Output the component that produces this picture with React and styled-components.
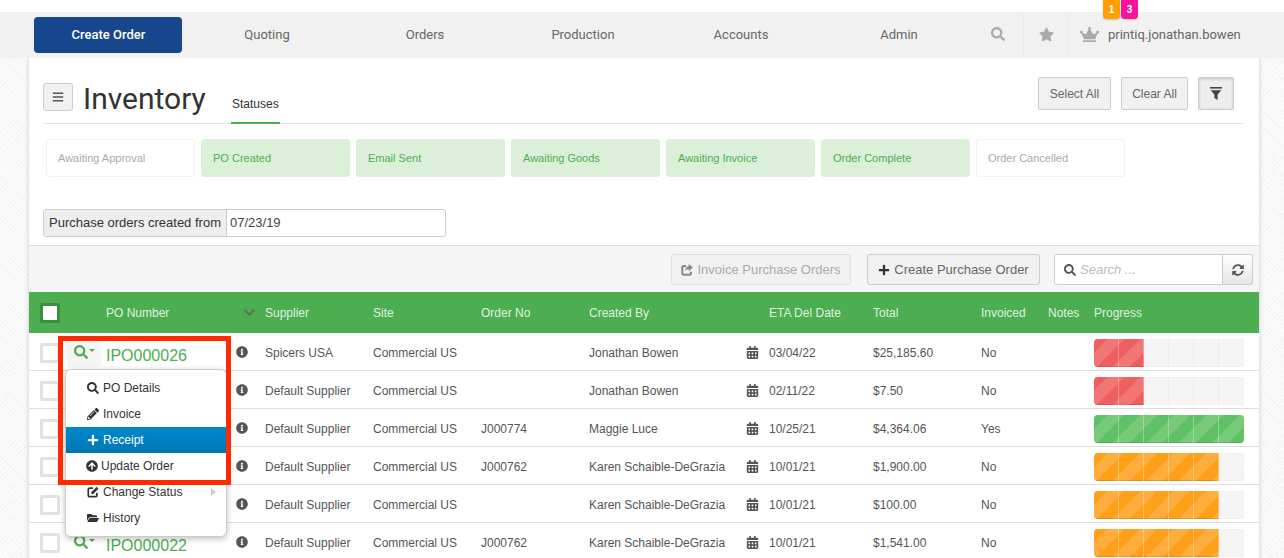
import React from 'react';
import styled, { createGlobalStyle } from 'styled-components';
import {
    FaSearch, FaStar, FaCrown, FaBars, FaPlus, FaPencilAlt, FaArrowCircleUp,
    FaFolderOpen, FaInfoCircle, FaCalendarAlt, FaSyncAlt, FaChevronDown,
} from 'react-icons/fa';

const GlobalStyle = createGlobalStyle`
    html, body {
        margin: 0;
        padding: 0;
        height: 558px;
        overflow: hidden;
        background-color: #fcfcfc;
        background-image:
            repeating-linear-gradient(45deg, #f5f5f5 0 1px, transparent 1px 3px),
            repeating-linear-gradient(-45deg, #f7f7f7 0 1px, transparent 1px 4px);
        font-family: "Liberation Sans", Arial, sans-serif;
        color: #333;
    }
`;

const navItems = ['Quoting', 'Orders', 'Production', 'Accounts', 'Admin'];
const statuses = [
    { label: 'Awaiting Approval', done: false },
    { label: 'PO Created', done: true },
    { label: 'Email Sent', done: true },
    { label: 'Awaiting Goods', done: true },
    { label: 'Awaiting Invoice', done: true },
    { label: 'Order Complete', done: true },
    { label: 'Order Cancelled', done: false },
];
const karen = 'Karen Schaible-DeGrazia';
// rows 2 to 5 have their PO number hidden behind the open menu
const orders = [
    { po: 'IPO000026', open: true, supplier: 'Spicers USA', job: '', by: 'Jonathan Bowen', eta: '03/04/22', total: '$25,185.60', invoiced: 'No', color: 'red', steps: 2 },
    { po: '', supplier: 'Default Supplier', job: '', by: 'Jonathan Bowen', eta: '02/11/22', total: '$7.50', invoiced: 'No', color: 'red', steps: 2 },
    { po: '', supplier: 'Default Supplier', job: 'J000774', by: 'Maggie Luce', eta: '10/25/21', total: '$4,364.06', invoiced: 'Yes', color: 'green', steps: 6 },
    { po: '', supplier: 'Default Supplier', job: 'J000762', by: karen, eta: '10/01/21', total: '$1,900.00', invoiced: 'No', color: 'orange', steps: 5 },
    { po: '', supplier: 'Default Supplier', job: '', by: karen, eta: '10/01/21', total: '$100.00', invoiced: 'No', color: 'orange', steps: 5 },
    { po: 'IPO000022', supplier: 'Default Supplier', job: 'J000762', by: karen, eta: '10/01/21', total: '$1,541.00', invoiced: 'No', color: 'orange', steps: 5 },
];
const barColors = { red: '#ef5f5f', green: '#5fc163', orange: '#ff9f1a' };

function Progress({ color, steps }) {
    return (
        <Track>
            {Array.from({ length: 6 }, (_, i) => (
                <Segment key={i} $color={i < steps ? barColors[color] : null} $index={i} />
            ))}
        </Track>
    );
}

function EditIcon() {
    return (
        <svg width="12" height="12" viewBox="0 0 14 14" fill="#333">
            <path d="M11.5 8v3a1.5 1.5 0 0 1-1.5 1.5H3A1.5 1.5 0 0 1 1.5 11V4A1.5 1.5 0 0 1 3 2.5h4" fill="none" stroke="#333" strokeWidth="2" />
            <path d="M5 7.2 11.2 1 13.4 3.2 7.2 9.4 5 9.4Z" />
        </svg>
    );
}

function ShareIcon() {
    return (
        <svg width="12" height="12" viewBox="0 0 14 14" fill="#888">
            <path d="M11.5 9v2a1.5 1.5 0 0 1-1.5 1.5H3A1.5 1.5 0 0 1 1.5 11V4A1.5 1.5 0 0 1 3 2.5h3" fill="none" stroke="#888" strokeWidth="2.4" />
            <path d="M9 0 14 4.2 9 8.4V6C7 6 5.8 6.6 5 8.2 5 5 6.6 2.8 9 2.6Z" />
        </svg>
    );
}

function OrderRow({ order }) {
    return (
        <Row>
            <CheckBox />
            <RowMenuButton $open={order.open}>
                <FaSearch size={14} />
                <Caret />
            </RowMenuButton>
            <PoNumber>{order.po}</PoNumber>
            <InfoIcon><FaInfoCircle size={12} /></InfoIcon>
            <span>{order.supplier}</span>
            <span>Commercial US</span>
            <span>{order.job}</span>
            <span>{order.by}</span>
            <InfoIcon><FaCalendarAlt size={13} /></InfoIcon>
            <span>{order.eta}</span>
            <span>{order.total}</span>
            <span>{order.invoiced}</span>
            <span />
            <Progress color={order.color} steps={order.steps} />
        </Row>
    );
}

export default function App() {
    return (
        <Page>
            <GlobalStyle />
            <TopNav>
                <CreateOrder>Create Order</CreateOrder>
                {navItems.map(item => <NavItem key={item}>{item}</NavItem>)}
                <NavIcon $width={47} $shift={5}><FaSearch size={14} /></NavIcon>
                <NavIcon $width={45}><FaStar size={15} /></NavIcon>
                <UserCell>
                    <Badge $color="#ffa000" $left={34}>1</Badge>
                    <Badge $color="#f5149a" $left={52}>3</Badge>
                    <FaCrown size={19} color="#aaa" />
                    <span>printiq.jonathan.bowen</span>
                </UserCell>
            </TopNav>

            <Card>
                <TopSection>
                    <PageHead>
                        <MenuButton><FaBars size={12} /></MenuButton>
                        <Title>Inventory</Title>
                        <Tab>Statuses</Tab>
                        <HeadActions>
                            <GreyButton $width={73}>Select All</GreyButton>
                            <GreyButton $width={67}>Clear All</GreyButton>
                            <FilterButton $width={36}>
                                <svg width="12" height="13" viewBox="0 0 12 13" fill="#444">
                                    <rect x="0" y="0" width="12" height="1.6" />
                                    <path d="M0.6 3.2H11.4L7.6 7.6V13L4.4 11V7.6Z" />
                                </svg>
                            </FilterButton>
                        </HeadActions>
                    </PageHead>
                    <StatusRow>
                        {statuses.map(s => <Status key={s.label} $done={s.done}>{s.label}</Status>)}
                    </StatusRow>
                    <DateGroup>
                        <DateLabel>Purchase orders created from</DateLabel>
                        <DateValue>07/23/19</DateValue>
                    </DateGroup>
                </TopSection>

                <Toolbar>
                    <ToolButton $disabled><ShareIcon />Invoice Purchase Orders</ToolButton>
                    <ToolButton $width={173}><FaPlus size={12} color="#333" />Create Purchase Order</ToolButton>
                    <SearchGroup>
                        <SearchBox>
                            <FaSearch size={12} color="#555" />
                            <em>Search ...</em>
                        </SearchBox>
                        <RefreshButton><FaSyncAlt size={12} /></RefreshButton>
                    </SearchGroup>
                </Toolbar>

                <HeadRow>
                    <HeadCheck />
                    <span />
                    <span>PO Number</span>
                    <SortIcon><FaChevronDown size={13} /></SortIcon>
                    <span>Supplier</span>
                    <span>Site</span>
                    <span>Order No</span>
                    <span>Created By</span>
                    <span />
                    <span>ETA Del Date</span>
                    <span>Total</span>
                    <span>Invoiced</span>
                    <span>Notes</span>
                    <span>Progress</span>
                </HeadRow>

                <TableBody>
                    {orders.map((order, i) => <OrderRow key={i} order={order} />)}
                    <Dropdown>
                        <MenuItem><FaSearch size={12} />PO Details</MenuItem>
                        <MenuItem><FaPencilAlt size={12} />Invoice</MenuItem>
                        <MenuItem $active><FaPlus size={12} />Receipt</MenuItem>
                        <MenuItem $tight><FaArrowCircleUp size={12} />Update Order</MenuItem>
                        <MenuItem><EditIcon />Change Status<SubCaret /></MenuItem>
                        <MenuItem><FaFolderOpen size={12} />History</MenuItem>
                    </Dropdown>
                    <Highlight />
                </TableBody>
            </Card>
        </Page>
    );
}

const Page = styled.div`
    height: 558px;
    overflow: hidden;
    padding-top: 12px;
    box-sizing: border-box;
    position: relative;
    &::before {
        content: '';
        display: block;
        position: absolute;
        top: 0;
        left: 0;
        right: 0;
        height: 12px;
        background: #fff;
    }
`;

const TopNav = styled.nav`
    display: flex;
    align-items: center;
    height: 46px;
    padding-left: 29px;
    background: #f1f1f1;
    font-family: Roboto, sans-serif;
    font-size: 13px;
    color: #666;
    position: relative;
`;

const CreateOrder = styled.div`
    width: 148px;
    height: 36px;
    margin: 0 5px;
    padding: 0 0 2px 1px;
    box-sizing: border-box;
    border-radius: 4px;
    background: #16478d;
    color: #fff;
    font-weight: 500;
    display: flex;
    align-items: center;
    justify-content: center;
`;

const NavItem = styled.div`
    width: 158px;
    box-sizing: border-box;
    padding: 0 0 2px 2px;
    text-align: center;
`;

const NavIcon = styled.div`
    width: ${p => p.$width}px;
    height: 46px;
    box-sizing: border-box;
    padding: 0 ${p => p.$shift || 0}px 2px 0;
    border-right: 1px solid #ebebeb;
    color: #aaa;
    display: flex;
    align-items: center;
    justify-content: center;
`;

const UserCell = styled.div`
    display: flex;
    align-items: center;
    gap: 9px;
    height: 46px;
    box-sizing: border-box;
    padding: 0 0 2px 11px;
    white-space: nowrap;
    position: relative;
`;

const Badge = styled.div`
    position: absolute;
    top: -12px;
    left: ${p => p.$left}px;
    width: 17px;
    height: 19px;
    border-radius: 0 0 4px 4px;
    background: ${p => p.$color};
    color: #fff;
    font-family: "Liberation Sans", sans-serif;
    font-size: 10px;
    font-weight: 700;
    display: flex;
    align-items: center;
    justify-content: center;
    box-shadow: 0 1px 2px rgba(0, 0, 0, 0.2);
`;

const Card = styled.main`
    margin: 0 25px 0 29px;
    background: #fff;
    box-shadow: 0 0 5px rgba(0, 0, 0, 0.2);
    font-size: 12px;
`;

const TopSection = styled.section`
    padding: 0 15px 8px 14px;
`;

const PageHead = styled.header`
    display: flex;
    align-items: flex-start;
    height: 66px;
    padding-top: 19px;
    box-sizing: border-box;
    border-bottom: 1px solid #e5e5e5;
`;

const MenuButton = styled.div`
    width: 30px;
    height: 28px;
    margin-top: 6px;
    box-sizing: border-box;
    border: 1px solid #ccc;
    border-radius: 3px;
    background: #f1f1f1;
    color: #555;
    display: flex;
    align-items: center;
    justify-content: center;
`;

const Title = styled.h1`
    margin: 2px 0 0 10px;
    font-family: Roboto, sans-serif;
    font-size: 30px;
    font-weight: 400;
    line-height: 40px;
    color: #333;
`;

const Tab = styled.div`
    align-self: flex-end;
    margin: 0 0 -1px 25px;
    padding-bottom: 10px;
    line-height: 16px;
    width: 49px;
    text-align: center;
    color: #333;
    border-bottom: 2px solid #4cae50;
`;

const HeadActions = styled.div`
    margin-left: auto;
    margin-right: 10px;
    display: flex;
    gap: 10px;
`;

const GreyButton = styled.div`
    width: ${p => p.$width}px;
    height: 33px;
    box-sizing: border-box;
    border: 1px solid #ccc;
    border-radius: 2px;
    background: #f1f1f1;
    color: #666;
    display: flex;
    align-items: center;
    justify-content: center;
`;

const FilterButton = styled(GreyButton)`
    background: #eee;
    box-shadow: inset 0 1px 3px rgba(0, 0, 0, 0.2);
`;

const StatusRow = styled.div`
    display: flex;
    gap: 6px;
    margin-top: 15px;
    padding-left: 3px;
`;

const Status = styled.div`
    width: 149px;
    height: 38px;
    box-sizing: border-box;
    padding-left: 11px;
    border-radius: 3px;
    border: 1px solid ${p => (p.$done ? '#dcefd9' : '#eef3ec')};
    background: ${p => (p.$done ? '#dcefd9' : '#fff')};
    color: ${p => (p.$done ? '#4cae50' : '#aaa')};
    font-size: 11px;
    display: flex;
    align-items: center;
`;

const DateGroup = styled.div`
    display: flex;
    width: 403px;
    height: 28px;
    margin-top: 32px;
    box-sizing: border-box;
    border: 1px solid #ccc;
    border-radius: 3px;
    font-size: 13px;
    overflow: hidden;
`;

const DateLabel = styled.div`
    width: 183px;
    box-sizing: border-box;
    padding-left: 5px;
    background: #eee;
    border-right: 1px solid #ccc;
    color: #333;
    line-height: 26px;
    white-space: nowrap;
`;

const DateValue = styled.div`
    padding-left: 3px;
    color: #444;
    line-height: 26px;
`;

const Toolbar = styled.div`
    display: flex;
    justify-content: flex-end;
    gap: 16px;
    height: 47px;
    padding: 8px 6px 0 0;
    box-sizing: border-box;
    border-top: 1px solid #ddd;
    background: #f5f5f5;
`;

const ToolButton = styled.div`
    width: ${p => p.$width || 180}px;
    height: 31px;
    box-sizing: border-box;
    border: 1px solid ${p => (p.$disabled ? '#e2e2e2' : '#ccc')};
    border-radius: 3px;
    background: #f1f1f1;
    color: ${p => (p.$disabled ? '#aaa' : '#666')};
    font-size: 13px;
    display: flex;
    align-items: center;
    justify-content: center;
    gap: 4px;
    white-space: nowrap;
`;

const SearchGroup = styled.div`
    display: flex;
    width: 199px;
    height: 31px;
    margin-left: -2px;
`;

const SearchBox = styled.div`
    flex: 1;
    box-sizing: border-box;
    border: 1px solid #ccc;
    border-radius: 3px 0 0 3px;
    background: #fff;
    padding-left: 9px;
    display: flex;
    align-items: center;
    gap: 4px;
    font-size: 13px;
    color: #bbb;
`;

const RefreshButton = styled.div`
    width: 30px;
    box-sizing: border-box;
    border: 1px solid #ccc;
    border-left: 0;
    border-radius: 0 3px 3px 0;
    background: linear-gradient(#fff, #e6e6e6);
    color: #555;
    display: flex;
    align-items: center;
    justify-content: center;
`;

const columns = '26px 40px 130px 29px 108px 108px 108px 157px 23px 104px 108px 67px 46px 150px';

const HeadRow = styled.div`
    display: grid;
    grid-template-columns: ${columns};
    align-items: center;
    height: 41px;
    padding-left: 11px;
    background: #4cae50;
    color: rgba(255, 255, 255, 0.85);
    white-space: nowrap;
`;

const HeadCheck = styled.div`
    width: 20px;
    height: 20px;
    box-sizing: border-box;
    border: 3px solid #3a8f3e;
    border-radius: 2px;
    background: #fff;
`;

const SortIcon = styled.span`
    color: #5f6f5f;
    padding-left: 7px;
    display: flex;
`;

const TableBody = styled.div`
    position: relative;
`;

const Row = styled.div`
    display: grid;
    grid-template-columns: ${columns};
    align-items: center;
    height: 38px;
    padding: 3px 0 0 11px;
    box-sizing: border-box;
    border-bottom: 1px solid #ddd;
    color: #555;
    white-space: nowrap;
`;

const CheckBox = styled.div`
    width: 20px;
    height: 20px;
    box-sizing: border-box;
    border: 3px solid #e2e2e2;
    border-radius: 2px;
    background: #fff;
`;

const RowMenuButton = styled.div`
    width: 35px;
    height: 27px;
    margin-top: 1px;
    border-radius: 4px;
    background: ${p => (p.$open ? '#f5f5f5' : 'transparent')};
    color: #4cae50;
    display: flex;
    align-items: center;
    padding: 0 0 3px 8px;
    box-sizing: border-box;
    gap: 1px;
`;

const Caret = styled.span`
    width: 0;
    height: 0;
    border-left: 3px solid transparent;
    border-right: 3px solid transparent;
    border-top: 3px solid #4cae50;
    margin-bottom: 3px;
`;

const PoNumber = styled.span`
    font-size: 16px;
    color: #4cae50;
    margin-top: 5px;
`;

const InfoIcon = styled.span`
    color: #555;
    display: flex;
    margin-top: -2px;
`;

const Track = styled.div`
    display: flex;
    height: 28px;
    border-radius: 4px;
    overflow: hidden;
    background: #f5f5f5;
    box-shadow: inset 0 0 1px rgba(0, 0, 0, 0.15);
`;

const Segment = styled.div`
    width: 25px;
    height: 100%;
    box-sizing: border-box;
    border-right: 1px solid ${p => (p.$color ? 'rgba(255, 255, 255, 0.3)' : '#ececec')};
    background-color: ${p => p.$color || 'transparent'};
    background-image: ${p => (p.$color
        ? 'linear-gradient(135deg, rgba(255,255,255,.15) 25%, transparent 25%, transparent 50%, rgba(255,255,255,.15) 50%, rgba(255,255,255,.15) 75%, transparent 75%)'
        : 'none')};
    background-size: 33px 33px;
    background-position: ${p => 14 - p.$index * 25}px 0;
    box-shadow: ${p => (p.$color ? 'inset 0 -1px 0 rgba(0, 0, 0, 0.12)' : 'none')};
    &:last-child {
        border-right: 0;
    }
`;

const Dropdown = styled.div`
    position: absolute;
    top: 36px;
    left: 36px;
    width: 162px;
    padding: 5px 0;
    box-sizing: border-box;
    background: #fff;
    border: 1px solid #ccc;
    border-radius: 6px;
    box-shadow: 0 2px 6px rgba(0, 0, 0, 0.25);
`;

const MenuItem = styled.div`
    position: relative;
    height: 26px;
    padding-left: ${p => (p.$tight ? 20 : 21)}px;
    display: flex;
    align-items: center;
    gap: ${p => (p.$tight ? 3 : 4)}px;
    color: ${p => (p.$active ? '#fff' : '#333')};
    background: ${p => (p.$active ? 'linear-gradient(#0088cc, #0077b3)' : 'none')};
`;

const SubCaret = styled.span`
    position: absolute;
    right: 10px;
    top: 9px;
    width: 0;
    height: 0;
    border-top: 4px solid transparent;
    border-bottom: 4px solid transparent;
    border-left: 5px solid #ccc;
`;

const Highlight = styled.div`
    position: absolute;
    top: 3px;
    left: 29px;
    width: 173px;
    height: 149px;
    box-sizing: border-box;
    border: 5px solid #ff2a00;
    pointer-events: none;
`;
